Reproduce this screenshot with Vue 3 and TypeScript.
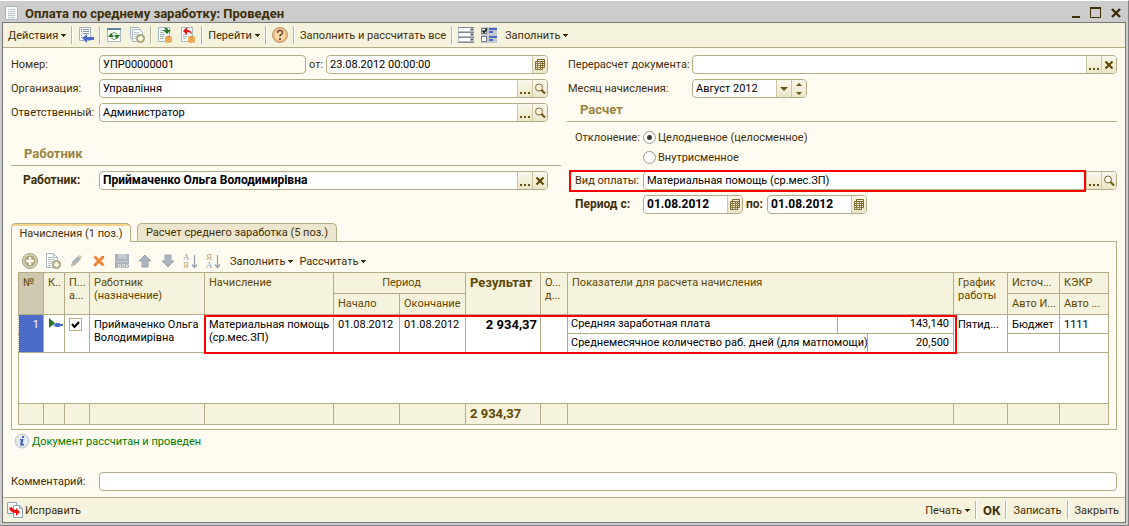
<script setup lang="ts">
import { ref } from 'vue'

interface Tool {
  kind: 'icon' | 'text' | 'sep'
  id?: string
  label?: string
  menu?: boolean
}

const sep: Tool = { kind: 'sep' }
const icon = (id: string, label: string): Tool => ({ kind: 'icon', id, label })
const text = (label: string, menu = false): Tool => ({ kind: 'text', label, menu })

const mainTools: Tool[] = [
  text('Действия', true), sep,
  icon('goto', 'Найти в списке'), sep,
  icon('refresh', 'Обновить'), icon('copy', 'Скопировать'), sep,
  icon('post', 'Провести'), icon('unpost', 'Отмена проведения'), sep,
  text('Перейти', true), sep,
  icon('help', 'Справка'), sep,
  text('Заполнить и рассчитать все'), sep,
  icon('rows', 'Список'), icon('checks', 'Настройка'),
  text('Заполнить', true),
]

const gridTools: Tool[] = [
  icon('add', 'Добавить'), icon('copy', 'Скопировать'), icon('edit', 'Изменить'),
  icon('delete', 'Удалить'), icon('save', 'Сохранить'), icon('up', 'Вверх'),
  icon('down', 'Вниз'), icon('az', 'По возрастанию'), icon('za', 'По убыванию'),
  text('Заполнить', true), text('Рассчитать', true),
]

const number = ref('УПР00000001')
const date = ref('23.08.2012 00:00:00')
const organization = ref('Управління')
const responsible = ref('Администратор')
const employee = ref('Приймаченко Ольга Володимирівна')
const recalculated = ref('')
const month = ref('Август 2012')
const deviation = ref('full')
const payKind = ref('Материальная помощь (ср.мес.ЗП)')
const dateFrom = ref('01.08.2012')
const dateTo = ref('01.08.2012')
const comment = ref('')
const active = ref(true)
const tab = ref(0)
</script>

<template>
  <svg class="defs" aria-hidden="true">
    <symbol id="doc" viewBox="0 0 14 14"><path d="M.5.5h12v13H.5z" fill="#f8fafa" stroke="#a9b4b8" /><path d="M3 3.500h7M3 5.500h7M3 7.500h7M3 9.500h7M3 11.500h7" stroke="#b9c3c7" /></symbol>
    <symbol id="goto" viewBox="0 0 16 16"><path d="M1.500.5h11v13h-11z" fill="#fbfcfc" stroke="#a9b7bf" /><path d="M3 2.500h1M5 2.500h6M3 4.500h1M5 4.500h6M3 6.500h1M5 6.500h6M3 8.500h1M3 10.500h1" stroke="#8798a5" /><path d="M4 11l5-4v3h7v3H9v3z" fill="#4c6bc8" /></symbol>
    <symbol id="refresh" viewBox="0 0 16 16"><path d="M1.500 1.500h13v13h-13z" fill="#fbfcfc" stroke="#a9b7bf" /><path d="M1 1h14v2H1z" fill="#62869f" /><path d="M5 7q3-3 6 0M5 11q3 3 6 0" fill="none" stroke="#5f9a5b" /><path d="M2 10l3-4 3 4zM8 8h6l-3 4z" fill="#267522" /></symbol>
    <symbol id="copy" viewBox="0 0 16 16"><path d="M1.500.5h8l2 2v9h-10z" fill="#f8faf9" stroke="#a9b7bf" /><path d="M3.500 2.500h7l3 3v9h-10z" fill="#fbfcfc" stroke="#a9b7bf" /><path d="M5 5.500h5M5 7.500h5M5 9.500h3M5 11.500h3" stroke="#b9c3c9" /><circle cx="11.500" cy="11.500" r="4" fill="#bdb890" stroke="#999975" /><path d="M11.500 9v5M9 11.500h5" stroke="#fffce8" stroke-width="2" /></symbol>
    <symbol id="addcopy" viewBox="0 0 16 16"><path d="M1.500.5h7l4 4v10h-11z" fill="#fbfcfc" stroke="#a9b7bf" /><path d="M8.500.5v4h4" fill="none" stroke="#a9b7bf" /><path d="M3 4.500h5M3 6.500h7M3 8.500h5M3 10.500h4M3 12.500h3" stroke="#b9c3c9" /><circle cx="11.500" cy="11.500" r="4" fill="#bdb890" stroke="#999975" /><path d="M11.500 9v5M9 11.500h5" stroke="#fffce8" stroke-width="2" /></symbol>
    <symbol id="post" viewBox="0 0 16 16"><path d="M1.500.5h11v14h-11z" fill="#fbfcfc" stroke="#a9b7bf" /><path d="M3 3.500h4M3 5.500h4M3 7.500h5M3 9.500h4M3 11.500h3" stroke="#a5b2bb" /><path d="M7 1q4-1 4 2h3l-4 4-4-4h3z" fill="#267522" /><path d="M8 10q3-2 7 0v5q-4 2-7 0z" fill="#e08a36" /><path d="M8 10.500q4 2 7 0M8 12.500q4 2 7 0M8 14.500q4 2 7 0" fill="none" stroke="#ffe08a" stroke-width=".8" /></symbol>
    <symbol id="unpost" viewBox="0 0 16 16"><path d="M1.500.5h11v14h-11z" fill="#fbfcfc" stroke="#a9b7bf" /><path d="M3 7.500h4M3 9.500h4M3 11.500h3" stroke="#a5b2bb" /><path d="M3 4l4-4v3q5 0 5 5-1-3-5-3v3z" fill="#e51212" /><path d="M8 10q3-2 7 0v5q-4 2-7 0z" fill="#e08a36" /><path d="M8 10.500q4 2 7 0M8 12.500q4 2 7 0M8 14.500q4 2 7 0" fill="none" stroke="#ffe08a" stroke-width=".8" /></symbol>
    <symbol id="help" viewBox="0 0 16 16"><circle cx="8" cy="8" r="7.500" fill="#f3b77a" stroke="#bd9b7c" /><circle cx="8" cy="8" r="5.500" fill="#ffdba9" /><path d="M5.500 6q0-2.500 2.500-2.500t2.500 2q0 1.500-2.500 3v1" fill="none" stroke="#70543d" stroke-width="1.600" /><path d="M7 11h2v2H7z" fill="#70543d" /></symbol>
    <symbol id="rows" viewBox="0 0 16 16"><path d="M0 0h16v16H0z" fill="#b4bbc1" /><path d="M0 0h16v1H0zM0 5h16v1H0zM0 10h16v1H0zM0 15h16v1H0z" fill="#828b93" /><path d="M1 1h11v3H1zM1 6h11v3H1zM1 11h11v3H1z" fill="#fff" /><path d="M13 2h2l-1 1.500zM13 7h2l-1 1.500zM13 12h2l-1 1.500z" fill="#222" /></symbol>
    <symbol id="checks" viewBox="0 0 16 16"><path d="M0 0h16v16H0z" fill="#c2c8cd" /><path d="M.5 1.500h5v5h-5zM.5 9.500h5v5h-5z" fill="#fff" stroke="#747b80" /><path d="M1.500 3.500l1.500 2 3-4" fill="none" stroke="#111" stroke-width="1.500" /><path d="M8 2h8M8 5h4M8 10h8M8 13h4" stroke="#4c6bc8" stroke-width="2" /></symbol>
    <symbol id="add" viewBox="0 0 16 16"><circle cx="8" cy="8" r="7.500" fill="#d9d5b8" stroke="#a2a187" /><circle cx="8" cy="8" r="5.500" fill="#aaa57c" /><path d="M8 4v8M4 8h8" stroke="#fffdf2" stroke-width="2.500" /></symbol>
    <symbol id="edit" viewBox="0 0 16 16"><path d="M3 14l1-5 6-6 3 3-6 6z" fill="#a9b4b5" /><path d="M10 3l2-1 2 2-1 2z" fill="#d2c6a4" /><path d="M3 14l1-4 2 2z" fill="#d9c797" /></symbol>
    <symbol id="delete" viewBox="0 0 16 16"><path d="M3.500 3.500l9 9M12.500 3.500l-9 9" stroke="#ec8436" stroke-width="3" /><path d="M3 12l2 1M12 3l1 1" stroke="#bb6d32" /></symbol>
    <symbol id="save" viewBox="0 0 16 16"><path d="M1 1h14v14H1z" fill="#aab3bb" /><path d="M4 1h9v5H4z" fill="#c2c9ce" /><path d="M5 3.500h7M1 8.500h14" stroke="#c6cdd1" /><path d="M4.500 11.500h2v3h-2zM8.500 11.500h2v3h-2zM12.500 11v4M15 11l-2 2 2 2" fill="none" stroke="#d6dadc" /></symbol>
    <symbol id="up" viewBox="0 0 16 16"><path d="M8 2l6 6h-3v6H5V8H2z" fill="#aab5bd" stroke="#99a6af" /></symbol>
    <symbol id="down" viewBox="0 0 16 16"><path d="M8 14L2 8h3V2h6v6h3z" fill="#aab5bd" stroke="#99a6af" /></symbol>
    <symbol id="arrow-ln" viewBox="0 0 16 16"><path d="M11.500 2v12M9 11.500l2.500 3 2.500-3" fill="none" stroke="#91a0aa" stroke-width="1.200" /></symbol>
    <symbol id="mag" viewBox="0 0 12 12"><circle cx="5" cy="4.500" r="3.500" fill="#fffbe8" stroke="#7d6730" /><path d="M7.500 7l3.500 3.500" stroke="#6b5316" stroke-width="2" /></symbol>
    <symbol id="cross" viewBox="0 0 10 10"><path d="M1.500 1.500l7 7M8.500 1.500l-7 7" stroke="#5c4300" stroke-width="2" /></symbol>
    <symbol id="cal" viewBox="0 0 12 12"><path d="M3.500.5h7v8h-7z" fill="#f7f2d6" stroke="#7d6730" /><path d="M3 2.500h8M8.500 4.500h2M8.500 6.500h2" stroke="#7d6730" /><path d="M1.500 2.500h7v8h-7z" fill="#f7f2d6" stroke="#7d6730" /><path d="M1 4.500h7M1 6.500h7M1 8.500h7M3.500 3v8M6.500 3v8" stroke="#8d7945" /></symbol>
    <symbol id="caret" viewBox="0 0 5 3"><path d="M0 0h5v1H4v1H3v1H2V2H1V1H0z" fill="currentColor" /></symbol>
    <symbol id="dots" viewBox="0 0 10 2"><path d="M0 0h2v2H0zM4 0h2v2H4zM8 0h2v2H8z" fill="#6b5316" /></symbol>
    <symbol id="fix" viewBox="0 0 16 16"><path d="M.5.5h9v11h-9z" fill="#fff" stroke="#8aa5ad" /><path d="M6.500 3.500h6l3 3v9h-9z" fill="#fff" stroke="#8aa5ad" /><path d="M12.500 3.500v3h3" fill="none" stroke="#8aa5ad" /><path d="M2 6l3-1q1 3 4 3V6l4 4-4 4v-3q-6 0-7-5z" fill="#f01414" /></symbol>
    <symbol id="info" viewBox="0 0 16 16"><path d="M0 0h16v16H0z" fill="#fff" /><circle cx="8" cy="8" r="7" fill="#e4e9ec" stroke="#b9c2c6" /><path d="M8 3h2v2H8zM6 6h3.500l-1 5H10v1.500H6L7 7.500H6z" fill="#3d5fc4" /></symbol>
  </svg>

  <div class="window">
    <header class="title">
      <svg class="i14"><use href="#doc" /></svg>
      <h1>Оплата по среднему заработку: Проведен</h1>
      <button type="button" aria-label="Свернуть"><svg viewBox="0 0 12 12"><path d="M2 9h8v2H2z" fill="#3f2f08" /></svg></button>
      <button type="button" aria-label="Развернуть"><svg viewBox="0 0 12 12"><path d="M.5 1.500h10v9H.5z" fill="none" stroke="#3f2f08" /><path d="M0 1h11" stroke="#3f2f08" stroke-width="2" /></svg></button>
      <button type="button" aria-label="Закрыть"><svg viewBox="0 0 12 12"><path d="M2 2l8 8M10 2l-8 8" stroke="#3f2f08" stroke-width="2.400" /></svg></button>
    </header>

    <main class="frame">
      <nav class="bar main-bar">
        <template v-for="(t, i) in mainTools" :key="i">
          <i v-if="t.kind === 'sep'" class="sep"></i>
          <button v-else-if="t.kind === 'icon'" type="button" class="ico" :aria-label="t.label"><svg><use :href="'#' + t.id" /></svg></button>
          <button v-else type="button" class="txt">{{ t.label }}<svg v-if="t.menu" class="caret"><use href="#caret" /></svg></button>
        </template>
      </nav>

      <form class="form" @submit.prevent>
        <section class="col left">
          <div class="row">
            <label for="number">Номер:</label>
            <div class="field number"><input id="number" v-model="number" readonly /></div>
            <label for="date" class="mid">от:</label>
            <div class="field grow"><input id="date" v-model="date" /><button type="button" aria-label="Календарь"><svg class="i12"><use href="#cal" /></svg></button></div>
          </div>
          <div class="row">
            <label for="org">Организация:</label>
            <div class="field grow"><input id="org" v-model="organization" /><button type="button" aria-label="Выбрать"><svg class="dots"><use href="#dots" /></svg></button><button type="button" aria-label="Открыть"><svg class="i12"><use href="#mag" /></svg></button></div>
          </div>
          <div class="row">
            <label for="resp">Ответственный:</label>
            <div class="field grow"><input id="resp" v-model="responsible" /><button type="button" aria-label="Выбрать"><svg class="dots"><use href="#dots" /></svg></button><button type="button" aria-label="Открыть"><svg class="i12"><use href="#mag" /></svg></button></div>
          </div>
          <h2 class="tall">Работник</h2>
          <div class="row strong">
            <label for="emp" class="inset">Работник:</label>
            <div class="field grow"><input id="emp" v-model="employee" /><button type="button" aria-label="Выбрать"><svg class="dots"><use href="#dots" /></svg></button><button type="button" aria-label="Очистить"><svg class="i10"><use href="#cross" /></svg></button></div>
          </div>
        </section>

        <section class="col right">
          <div class="row wide">
            <label for="recalc">Перерасчет документа:</label>
            <div class="field grow"><input id="recalc" v-model="recalculated" /><button type="button" aria-label="Выбрать"><svg class="dots"><use href="#dots" /></svg></button><button type="button" aria-label="Очистить"><svg class="i10"><use href="#cross" /></svg></button></div>
          </div>
          <div class="row wide">
            <label for="month">Месяц начисления:</label>
            <div class="field month"><input id="month" v-model="month" /><button type="button" aria-label="Список"><svg class="pick" viewBox="0 0 8 4"><path d="M0 0h8L4 4z" fill="#6b5316" /></svg></button><button type="button" aria-label="Изменить месяц"><svg class="spin" viewBox="0 0 6 12"><path d="M0 3h6L3 0zM0 9h6L3 12z" fill="#6b5316" /></svg></button></div>
          </div>
          <h2>Расчет</h2>
          <fieldset>
            <legend>Отклонение:</legend>
            <label class="radio"><input v-model="deviation" type="radio" name="dev" value="full" />Целодневное (целосменное)</label>
            <label class="radio"><input v-model="deviation" type="radio" name="dev" value="part" />Внутрисменное</label>
          </fieldset>
          <div class="row short marked">
            <label for="kind">Вид оплаты:</label>
            <div class="field grow"><input id="kind" v-model="payKind" /><button type="button" aria-label="Выбрать"><svg class="dots"><use href="#dots" /></svg></button><button type="button" aria-label="Открыть"><svg class="i12"><use href="#mag" /></svg></button></div>
          </div>
          <div class="row short strong">
            <label for="from">Период с:</label>
            <div class="field date"><input id="from" v-model="dateFrom" /><button type="button" aria-label="Календарь"><svg class="i12"><use href="#cal" /></svg></button></div>
            <label for="to" class="mid">по:</label>
            <div class="field date"><input id="to" v-model="dateTo" /><button type="button" aria-label="Календарь"><svg class="i12"><use href="#cal" /></svg></button></div>
          </div>
        </section>
      </form>

      <section class="tabs">
        <div class="tab-list" role="tablist">
          <button type="button" role="tab" class="first" :class="{ on: tab === 0 }" :aria-selected="tab === 0" @click="tab = 0">Начисления (1 поз.)</button>
          <button type="button" role="tab" class="second" :class="{ on: tab === 1 }" :aria-selected="tab === 1" @click="tab = 1">Расчет среднего заработка (5 поз.)</button>
        </div>
        <div class="panel">
          <div class="bar grid-bar">
            <template v-for="t in gridTools" :key="t.label">
              <button v-if="t.kind === 'icon'" type="button" class="ico" :aria-label="t.label">
                <svg v-if="t.id === 'az' || t.id === 'za'" viewBox="0 0 16 16">
                  <text x="0" y="7" :class="t.id === 'az' ? 'cold' : 'warm'">{{ t.id === 'az' ? 'А' : 'Я' }}</text>
                  <text x="0" y="15" :class="t.id === 'az' ? 'warm' : 'cold'">{{ t.id === 'az' ? 'Я' : 'А' }}</text>
                  <use href="#arrow-ln" width="16" height="16" />
                </svg>
                <svg v-else><use :href="t.id === 'copy' ? '#addcopy' : '#' + t.id" /></svg>
              </button>
              <button v-else type="button" class="txt">{{ t.label }}<svg v-if="t.menu" class="caret"><use href="#caret" /></svg></button>
            </template>
          </div>
          <div class="grid-wrap">
            <table>
              <colgroup>
                <col class="c25" /><col class="c21" /><col class="c25" /><col class="c115" /><col class="c129" /><col class="c66" /><col class="c66" /><col class="c75" /><col class="c27" /><col /><col class="c54" /><col class="c52" /><col class="c49" />
              </colgroup>
              <thead>
                <tr>
                  <th rowspan="2" class="key">№</th><th rowspan="2">К..</th><th rowspan="2">П...<br />а...</th><th rowspan="2">Работник<br />(назначение)</th><th rowspan="2">Начисление</th><th colspan="2" class="center">Период</th><th rowspan="2" class="b">Результат</th><th rowspan="2">О...<br />д...</th><th rowspan="2">Показатели для расчета начисления</th><th rowspan="2">График<br />работы</th><th>Источ...</th><th>КЭКР</th>
                </tr>
                <tr><th>Начало</th><th>Окончание</th><th>Авто И...</th><th>Авто ...</th></tr>
              </thead>
              <tbody>
                <tr>
                  <td rowspan="2" class="current">1</td>
                  <td rowspan="2"><svg class="mark" viewBox="0 0 16 12"><path d="M1 0l6 5-6 5z" fill="#267522" /><path d="M5 7l3-2h3l2 1h2v2h-2l-2 1H8z" fill="#4c6bc8" /></svg></td>
                  <td rowspan="2"><input v-model="active" class="check" type="checkbox" aria-label="Активность" /></td>
                  <td rowspan="2">Приймаченко Ольга Володимирівна</td>
                  <td rowspan="2">Материальная помощь (ср.мес.ЗП)</td>
                  <td rowspan="2">01.08.2012</td><td rowspan="2">01.08.2012</td>
                  <td rowspan="2" class="b num">2 934,37</td><td rowspan="2"></td>
                  <td class="split"><div><span>Средняя заработная плата</span><span class="val v1">143,140</span></div></td>
                  <td rowspan="2">Пятид...</td><td>Бюджет</td><td>1111</td>
                </tr>
                <tr>
                  <td class="split"><div><span>Среднемесячное количество раб. дней (для матпомощи)</span><span class="val v2">20,500</span></div></td>
                  <td></td><td></td>
                </tr>
                <tr class="blank"><td colspan="13"></td></tr>
              </tbody>
              <tfoot>
                <tr><td v-for="n in 13" :key="n" :class="{ b: n === 8 }">{{ n === 8 ? '2 934,37' : '' }}</td></tr>
              </tfoot>
            </table>
            <div class="outline"></div>
          </div>
        </div>
      </section>

      <p class="status"><svg class="i16"><use href="#info" /></svg>Документ рассчитан и проведен</p>

      <div class="row comment">
        <label for="comment">Комментарий:</label>
        <div class="field grow"><input id="comment" v-model="comment" /></div>
      </div>

      <footer class="bar foot">
        <button type="button" class="txt fix"><svg class="i16"><use href="#fix" /></svg>Исправить</button>
        <button type="button" class="txt push">Печать<svg class="caret"><use href="#caret" /></svg></button>
        <i class="sep"></i>
        <button type="button" class="txt b">ОК</button>
        <i class="sep"></i>
        <button type="button" class="txt">Записать</button>
        <i class="sep"></i>
        <button type="button" class="txt">Закрыть</button>
      </footer>
    </main>
  </div>
</template>

<style>
body { background: #ccc; }
</style>

<style scoped>
* { box-sizing: border-box; }
.defs { position: absolute; width: 0; height: 0; }
.window { min-height: 100vh; display: flex; flex-direction: column; padding: 0 2px 2px; background: #ccc; border-top: 1px solid #fff; border-right: 1px solid #808080; border-bottom: 1px solid #808080; font: 11px/13px Roboto, "Liberation Sans", sans-serif; color: #3f2f08; }
.window button, .window input { font: inherit; color: inherit; margin: 0; padding: 0; border: 0; background: none; }
.title { display: flex; align-items: center; height: 21px; padding: 3px 4px 0 3px; }
.title h1 { flex: 1; margin: 0 0 0 6px; font-size: 13px; font-weight: 700; }
.title button { width: 12px; height: 12px; margin-left: 8px; }
.title svg, .ico svg { display: block; width: 100%; height: 100%; }
.title .i14 { width: 14px; height: 14px; }
.i16 { width: 16px; height: 16px; }
.i12 { width: 12px; height: 12px; }
.i10 { width: 10px; height: 10px; }
.frame { flex: 1; display: flex; flex-direction: column; border: 1px solid #777; background: #fffbf0; }

.bar { display: flex; align-items: center; }
.bar button { display: flex; align-items: center; white-space: nowrap; }
.main-bar { height: 25px; padding-left: 5px; background: #f5f2dd; border-bottom: 1px solid #b3ac86; }
.sep { width: 2px; height: 18px; margin: 0 5px; background: linear-gradient(90deg, #b9b69c 50%, #fff 50%); }
.window .ico { width: 16px; height: 16px; flex: none; }
.ico + .ico { margin-left: 7px; }
.ico + .txt { margin-left: 8px; }
.caret { width: 5px; height: 3px; margin-left: 3px; }
.cold, .warm { font: 9px "Liberation Serif", serif; fill: #8fa0ab; }
.warm { fill: #b9a26c; }

.form { display: grid; grid-template-columns: 1fr 1fr; gap: 6px; padding: 7px 8px 0; }
.col { display: flex; flex-direction: column; gap: 5px; }
.row { display: flex; align-items: center; height: 19px; position: relative; }
.row > label { width: 88px; flex: none; white-space: nowrap; }
.left .row { margin-right: 13px; }
.wide > label { width: 125px; padding-left: 1px; }
.short > label { width: 76px; padding-left: 8px; }
.row > label.mid { width: 20px; padding: 0 0 0 3px; }
.strong > label.mid { width: 24px; }
.left .inset { padding-left: 12px; }
.strong { font-size: 12px; font-weight: 700; }
.field { display: flex; height: 19px; overflow: hidden; background: #fff; border: 1px solid #b3ac86; border-radius: 4px; }
.grow { flex: 1; min-width: 0; }
.number { width: 207px; background: #fffbf0; }
.month { width: 115px; }
.date { width: 100px; }
.field input { flex: 1; min-width: 0; padding-left: 3px; color: #000; outline: none; }
.field button { display: grid; place-items: center; width: 15px; flex: none; border-left: 1px solid #cbc5a4; background: linear-gradient(#faf8ec, #ebe6c8); }
.dots { width: 10px; height: 2px; margin-top: 8px; }
.pick { width: 8px; height: 4px; }
.spin { width: 6px; height: 12px; }
h2 { display: flex; align-items: flex-end; height: 19px; margin: 0; padding: 0 0 5px 13px; border-bottom: 1px solid #b3ac86; font-size: 13px; font-weight: 700; line-height: 13px; color: #9b8440; }
h2.tall { height: 39px; }
fieldset { display: grid; grid-template-columns: 76px auto; grid-auto-rows: 20px; align-items: center; height: 39px; margin: 0; padding: 0; border: 0; }
legend { float: left; padding: 0 0 0 8px; }
.radio { grid-column: 2; display: flex; align-items: center; gap: 2px; }
.window .radio input { appearance: none; width: 13px; height: 13px; border: 1px solid #9c9c8c; border-radius: 50%; background: #fff; }
.window .radio input:checked { background: radial-gradient(circle, #3f3a30 2px, #fff 3px); }
.marked::after { content: ""; position: absolute; inset: -1px 31px -2px 2px; border: 2px solid #f00; pointer-events: none; }

.tabs { margin: 9px 8px 0; }
.tab-list { display: flex; gap: 6px; height: 18px; }
.window .tab-list button { height: 18px; background: #ebe6cd; border: 1px solid #b3ac86; border-bottom: 0; border-radius: 5px 5px 0 0; white-space: nowrap; overflow: hidden; }
.window .tab-list .on { height: 19px; background: linear-gradient(#fbd48a 2px, #fffbf0 2px); position: relative; }
.first { width: 120px; }
.second { width: 200px; }
.panel { padding: 8px 7px 4px 6px; border: 1px solid #b3ac86; }
.grid-bar { height: 22px; padding: 0 0 0 4px; }
.grid-bar .txt + .txt { margin-left: 6px; }
.grid-wrap { position: relative; }
.outline { position: absolute; inset: 43px 152px 71px 186px; border: 2px solid #f00; pointer-events: none; }
table { width: 100%; table-layout: fixed; border-collapse: collapse; background: #fff; color: #000; }
th, td { height: 19px; padding: 3px 0 0 4px; border: 1px solid #b3ac86; vertical-align: top; text-align: left; font-weight: 400; overflow: hidden; }
th { height: 21px; background: #f5f2dd; color: #5f4800; white-space: nowrap; }
.key { background: #cdc8af; }
.center { text-align: center; }
.window .b { font-size: 13px; font-weight: 700; }
td.current { background: #4c6bc8; color: #fff; text-align: right; padding-right: 4px; border: 1px dotted #b3ac86; }
td.num { text-align: right; padding-right: 3px; }
td.split { padding: 0; }
.split div { display: flex; height: 18px; line-height: 18px; }
.split span { flex: 1; min-width: 0; padding-left: 3px; white-space: nowrap; }
.split .val { flex: none; padding-right: 4px; border-left: 1px solid #b3ac86; text-align: right; }
.v1 { width: 116px; }
.v2 { width: 86px; }
.blank td { height: 51px; }
tfoot td { height: 21px; background: #f5f2dd; color: #5f4800; }
.mark { display: block; width: 16px; height: 12px; }
.window .check { appearance: none; display: block; width: 13px; height: 13px; border: 1px solid #b3ac86; background: #fff; }
.window .check:checked { background: no-repeat center / 9px 9px url("data:image/svg+xml,%3Csvg xmlns='http://www.w3.org/2000/svg' viewBox='0 0 9 9'%3E%3Cpath d='M1 4l2.500 3L8 2' fill='none' stroke='%23000' stroke-width='2'/%3E%3C/svg%3E"); }
.c21 { width: 21px; } .c25 { width: 25px; } .c27 { width: 27px; } .c49 { width: 49px; } .c52 { width: 52px; } .c54 { width: 54px; } .c66 { width: 66px; } .c75 { width: 75px; } .c115 { width: 115px; } .c129 { width: 129px; }

.status { display: flex; align-items: center; gap: 2px; margin: 3px 11px 0; color: #007d00; }
.comment { margin: auto 8px 6px; }
.foot { height: 25px; padding: 0 6px 0 4px; background: #f5f2dd; border-top: 1px solid #b3ac86; }
.foot .sep { margin: 0 6px 0 5px; }
.foot .fix { gap: 2px; }
.foot .push { margin-left: auto; }
</style>
